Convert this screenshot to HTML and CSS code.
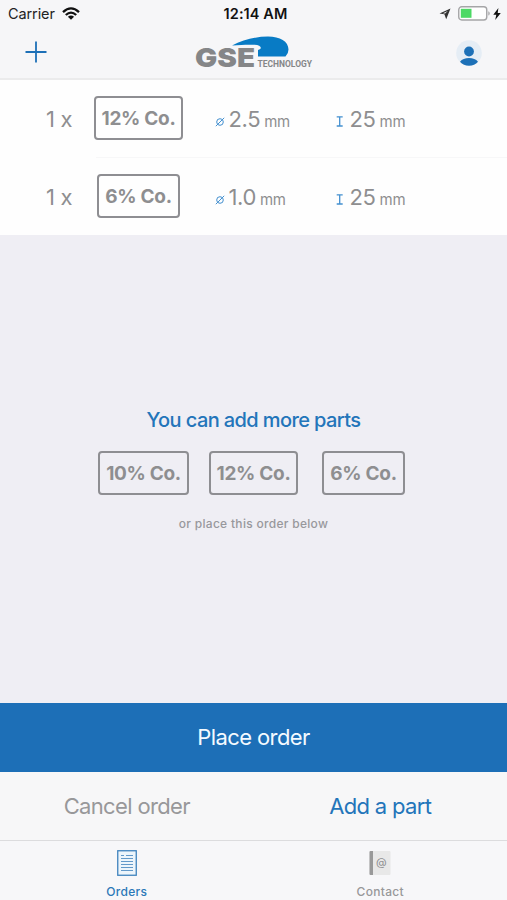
FILE: index.html
```
<!DOCTYPE html>
<html lang="en">
<head>
<meta charset="utf-8">
<title>Orders</title>
<link rel="stylesheet" href="styles.css">
</head>
<body>
<header class="header">
  <div class="status">
    <div class="carrier"><span>Carrier</span>
      <svg width="18" height="13" viewBox="0 0 18 13" fill="none" stroke="#111" stroke-width="2.3"><path d="M1 5.1Q9-2.4 17 5.1M3.8 8Q9 3.2 14.2 8"/><path d="M5.9 9.8Q9 7 12.1 9.8L9 12.8Z" fill="#111" stroke="none"/></svg>
    </div>
    <div class="time">12:14 AM</div>
    <div class="indicators">
      <svg class="locate" width="12" height="12" viewBox="0 0 12 12"><path d="M11.500.5.5 5.600 5.400 6.300 7.200 11.300Z" fill="#333"/><path d="M8.800 3.100 3.900 5.300 6.100 5.600Z" fill="#f6f6f8"/></svg>
      <svg class="battery" width="32" height="15" viewBox="0 0 32 15"><rect x=".75" y=".75" width="28" height="13.2" rx="3" fill="#fff" stroke="#a5a5a7" stroke-width="1.4"/><rect x="2.8" y="2.8" width="10.7" height="9" fill="#4cd964"/><path d="M30.3 5.2Q31.7 5.7 31.7 7.4T30.3 9.6Z" fill="#a5a5a7"/></svg>
      <svg width="8" height="12" viewBox="0 0 8 12"><path d="M5.4 0 .3 6.700H3.300L2.200 12 7.800 5H4.700Z" fill="#111"/></svg>
    </div>
  </div>
  <nav class="nav">
    <svg width="22" height="22" viewBox="0 0 22 22" stroke="#1d70b7" stroke-width="1.8"><path d="M11 .5V21.500M.5 11H21.500"/></svg>
    <svg class="logo" width="124" height="44" viewBox="-2 -4 124 44">
      <path d="M38 11.500C49 6 62 2.500 74 2.500C86 2.500 94.500 7.500 94.500 15.500Q94.500 19.500 91.500 22.500H64V16C69 14.500 67 11.200 60.500 10.800C53 10.400 47 11 38 11.500Z" fill="#087bc5"/>
      <text class="logo-mark" x="1" y="33" textLength="60" lengthAdjust="spacingAndGlyphs">GSE</text>
      <text class="logo-sub" x="63.500" y="33" textLength="54.500" lengthAdjust="spacingAndGlyphs">TECHNOLOGY</text>
    </svg>
    <svg class="profile" width="26" height="26" viewBox="0 0 26 26"><circle cx="13" cy="13" r="12.800" fill="#e5edf5"/><circle cx="13" cy="11.500" r="4.900" fill="#1d70b7"/><path d="M4 21.700Q7 18 13 18T22 21.700Q18.500 25.700 13 25.700T4 21.700Z" fill="#1d70b7"/></svg>
  </nav>
</header>
<main class="main">
  <section class="items">
    <div class="item">
      <span class="qty">1 x</span>
      <span class="slot"><span class="part">12% Co.</span></span>
      <span class="measure diameter"><svg width="10" height="10" viewBox="0 0 10 10" fill="none" stroke="#4390d0"><circle cx="5" cy="5" r="3.300"/><path d="M.8 9.200 9.200.8"/></svg><b>2.5</b><small>mm</small></span>
      <span class="measure"><svg width="8" height="11" viewBox="0 0 8 11" fill="none" stroke="#4390d0" stroke-width="1.300"><path d="M.7.9H6.700M3.700.9V10M.7 10H6.700"/></svg><b>25</b><small>mm</small></span>
    </div>
    <div class="item">
      <span class="qty">1 x</span>
      <span class="slot"><span class="part">6% Co.</span></span>
      <span class="measure diameter"><svg width="10" height="10" viewBox="0 0 10 10" fill="none" stroke="#4390d0"><circle cx="5" cy="5" r="3.300"/><path d="M.8 9.200 9.200.8"/></svg><b>1.0</b><small>mm</small></span>
      <span class="measure"><svg width="8" height="11" viewBox="0 0 8 11" fill="none" stroke="#4390d0" stroke-width="1.300"><path d="M.7.9H6.700M3.700.9V10M.7 10H6.700"/></svg><b>25</b><small>mm</small></span>
    </div>
  </section>
  <section class="more">
    <h1>You can add more parts</h1>
    <div class="choices">
      <span class="slot"><span class="part">10% Co.</span></span>
      <span class="slot"><span class="part">12% Co.</span></span>
      <span class="slot"><span class="part">6% Co.</span></span>
    </div>
    <p>or place this order below</p>
  </section>
</main>
<div class="place">Place order</div>
<div class="actions"><span class="cancel">Cancel order</span><span class="add">Add a part</span></div>
<footer class="tabs">
  <div class="tab active">
    <svg width="20" height="26" viewBox="0 0 20 26" fill="none" stroke="#3f82bd"><rect x=".75" y=".75" width="18.500" height="24.500" fill="#edf5fb" stroke-width="1.300"/><path d="M4 5.500H7M9 5.500H16M4 8.500H16M4 11.500H16M4 14.500H16M4 17.500H16M4 20.500H16" stroke-width=".8"/></svg>
    <span>Orders</span>
  </div>
  <div class="tab">
    <svg width="22" height="26" viewBox="0 0 22 26"><rect x=".5" y="1" width="21" height="24" rx="1" fill="#e8e8e8"/><path d="M.5 2Q.5 1 1.500 1H4V25H1.500Q.5 25 .5 24Z" fill="#999"/><text class="at" x="12.300" y="15.500" text-anchor="middle">@</text></svg>
    <span>Contact</span>
  </div>
</footer>
</body>
</html>
```
FILE: styles.css
```
* { box-sizing: border-box; }
body { margin: 0; width: 507px; height: 900px; overflow: hidden; display: flex; flex-direction: column; background: #efeef4; color: #8e8e90; font-family: Inter, "Liberation Sans", sans-serif; }
svg { display: block; flex: none; }
.header { height: 80px; flex: none; background: #f6f6f8; border-bottom: 2px solid #ebebec; }
.status { height: 27px; display: grid; grid-template-columns: 1fr auto 1fr; align-items: center; padding: 0 6px 0 8px; color: #222; font-size: 14.5px; }
.carrier { display: flex; align-items: center; gap: 7px; letter-spacing: -.1px; }
.time { font-weight: 600; color: #111; letter-spacing: .1px; padding-left: 2px; }
.indicators { display: flex; align-items: center; justify-content: flex-end; }
.battery { margin: 0 3px 0 7px; }
.nav { height: 49px; display: flex; justify-content: space-between; align-items: center; padding: 0 25px; }
.logo { margin-left: 5px; }
.logo-mark { font: 900 26px Inter, sans-serif; fill: #858688; }
.logo-sub { font: 700 9px Roboto, sans-serif; fill: #858688; }
.profile { position: relative; top: 1px; }
.main { flex: 1; display: flex; flex-direction: column; }
.items { height: 155px; background: #fefefe; }
.item { height: 78px; display: grid; grid-template-columns: 47.5px 90px 121px 1fr; padding: 0 0 2px 46px; align-items: center; position: relative; }
.item + .item::before { content: ""; position: absolute; left: 96px; right: 0; top: -1px; height: 1px; background: #f7f7f8; }
.qty { font-size: 22px; letter-spacing: -.3px; padding-top: 2px; }
.slot { width: 90px; display: flex; justify-content: center; }
.part { height: 44px; padding: 0 6px; border: 2px solid #8e8e92; border-radius: 4px; font-size: 19px; line-height: 42px; font-weight: 700; letter-spacing: -.3px; white-space: nowrap; }
.measure { display: flex; align-items: baseline; padding: 2px 0 0 31px; }
.measure b { font-size: 22px; font-weight: 400; letter-spacing: -.4px; margin-left: 4px; }
.measure + .measure b { margin-left: 6px; }
.measure small { font-size: 15px; margin-left: 4px; letter-spacing: -.2px; }
.more { flex: 1; display: flex; flex-direction: column; justify-content: center; align-items: center; }
h1 { margin: 1px 0 19px; font-size: 20px; line-height: 24px; font-weight: 500; color: #2375ba; letter-spacing: -.6px; }
.choices { display: flex; gap: 20px; }
p { margin: 21px 0 0; font-size: 12px; line-height: 16px; font-weight: 500; color: #98989c; letter-spacing: .3px; }
.place { height: 69px; flex: none; background: #1d6fb7; color: #f4faff; display: flex; align-items: center; justify-content: center; padding-bottom: 1px; font-size: 22px; letter-spacing: -.6px; }
.actions { height: 69px; flex: none; background: #f7f7f8; border-bottom: 1px solid #dcdcde; display: grid; grid-template-columns: 1fr 1fr; place-items: center; font-size: 22px; letter-spacing: -.65px; }
.cancel { color: #98989a; }
.add { color: #2375ba; }
.tabs { height: 59px; flex: none; background: #f7f7f9; display: grid; grid-template-columns: 1fr 1fr; }
.tab { display: flex; flex-direction: column; align-items: center; padding-top: 9px; gap: 8px; font-size: 12px; line-height: 15px; font-weight: 500; color: #98989a; letter-spacing: .3px; }
.tab.active { color: #2b78b8; }
.at { font: 11px Inter, sans-serif; letter-spacing: 0; fill: #8e8e90; }
```
